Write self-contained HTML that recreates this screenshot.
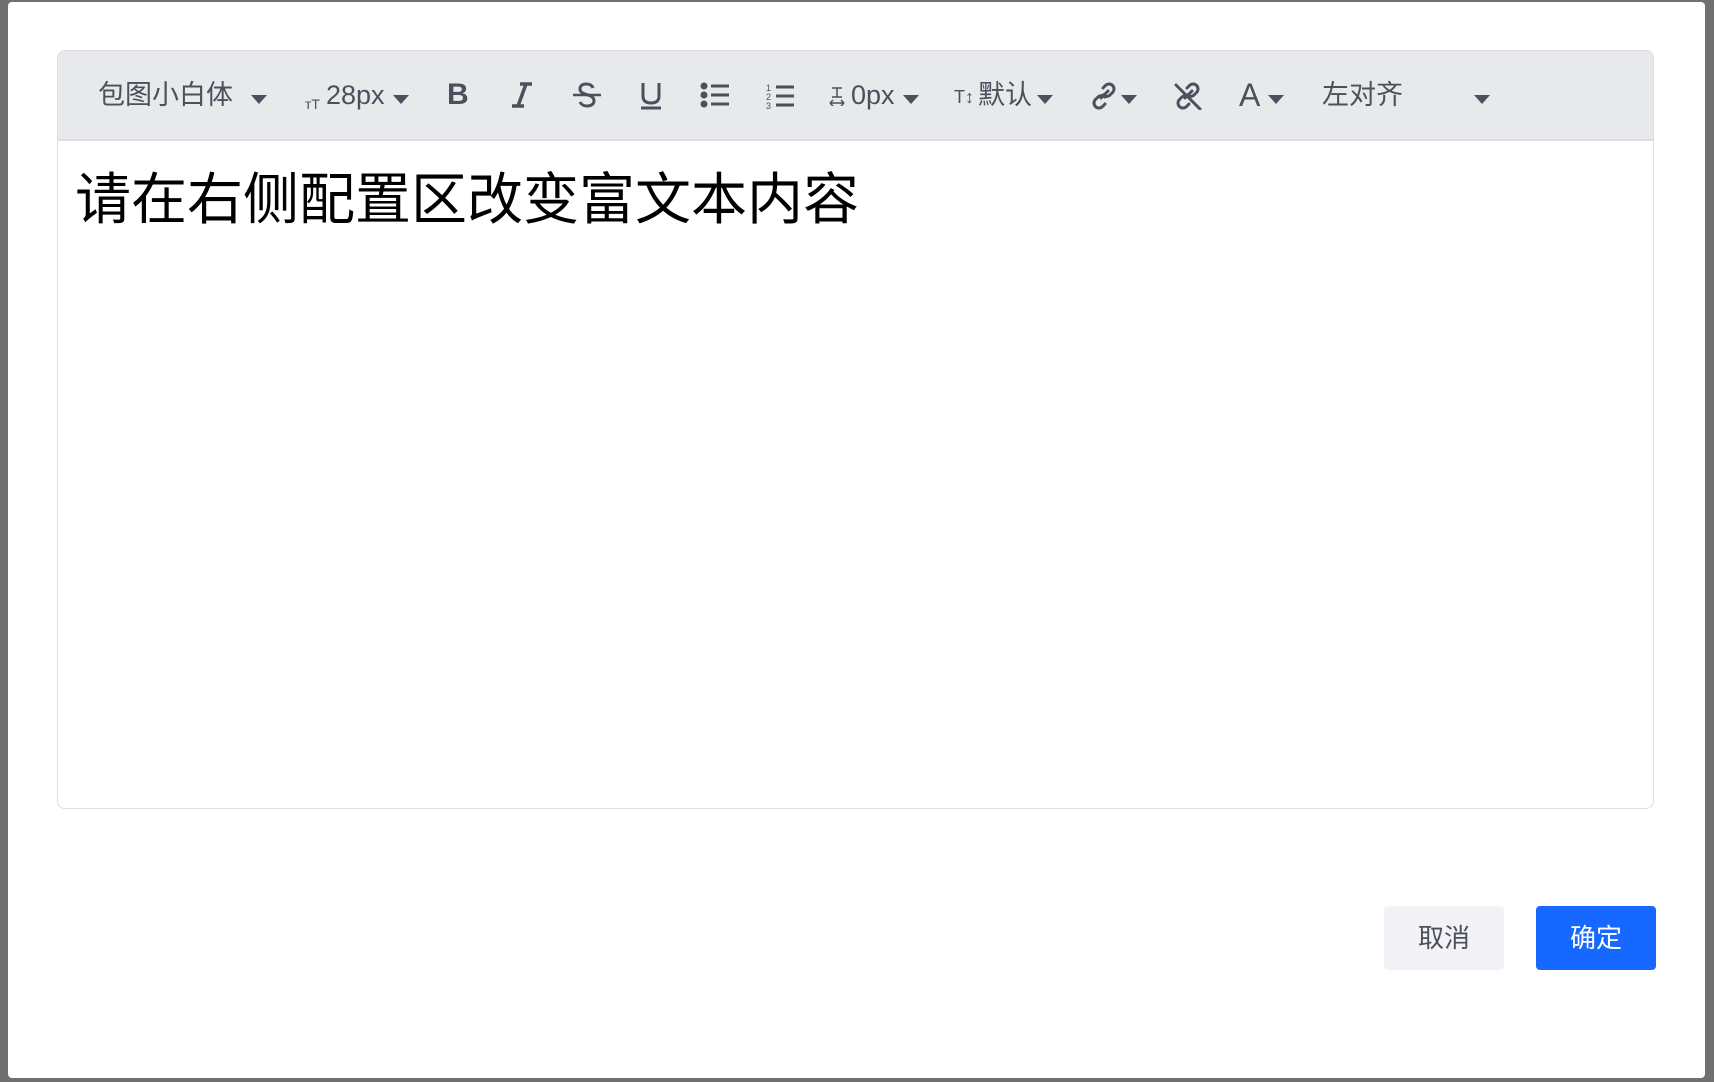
<!DOCTYPE html>
<html><head><meta charset="utf-8">
<style>
*{margin:0;padding:0;box-sizing:border-box}
body{width:1714px;height:1082px;background:#707070;position:relative;overflow:hidden;font-family:"Liberation Sans","Noto Sans CJK SC",sans-serif}
.modal{position:absolute;left:8px;top:2px;width:1697px;height:1076px;background:#fff;border-radius:4px}
.box{position:absolute;left:57px;top:50px;width:1597px;height:759px;border:1px solid #dcdee2;border-radius:8px;overflow:hidden;background:#fff}
.tb{position:absolute;left:0;top:0;width:100%;height:90px;background:#e8e9eb;border-bottom:2px solid #dcdee2}
.t{position:absolute;top:75px;height:40px;line-height:40px;font-size:27px;color:#4b505c;white-space:nowrap}
.ic{position:absolute;top:82px}
.car{position:absolute;width:0;height:0;border-left:8px solid transparent;border-right:8px solid transparent;border-top:9px solid #4b505c}
.content{position:absolute;left:75px;top:167px;font-size:56px;line-height:66px;color:#000;font-family:"Liberation Sans","Noto Sans CJK SC",sans-serif;white-space:nowrap}
.btn{position:absolute;top:906px;width:120px;height:64px;border-radius:4px;font-size:26px;line-height:64px;text-align:center}
</style></head><body>
<div class="modal"></div>
<div class="box"><div class="tb"></div></div>

<span class="t" style="left:98px">包图小白体</span>
<div class="car" style="left:251px;top:95px"></div>

<span class="t" style="left:305px;font-size:14px;top:84px">ᴛT</span>
<span class="t" style="left:326px">28px</span>
<div class="car" style="left:393px;top:95px"></div>

<span class="t" style="left:447px;font-weight:bold;font-size:30px">B</span>
<svg class="ic" style="left:510px" width="24" height="26" viewBox="0 0 24 26"><path d="M10 2h12M2 24h12M16 2L8 24" stroke="#4b505c" stroke-width="3.5" fill="none"/></svg>
<svg class="ic" style="left:572px" width="30" height="26" viewBox="0 0 30 26"><path d="M21 6c-1-3-4-4-7-4-4 0-6 2-6 5 0 7 14 4 14 12 0 3-3 5-7 5-4 0-6-2-7-4" stroke="#4b505c" stroke-width="3" fill="none"/><path d="M1 13h28" stroke="#4b505c" stroke-width="2.5"/></svg>
<svg class="ic" style="left:640px" width="22" height="28" viewBox="0 0 22 28"><path d="M3 1v13c0 5 3 7 8 7s8-2 8-7V1" stroke="#4b505c" stroke-width="3" fill="none"/><path d="M1 26h20" stroke="#4b505c" stroke-width="3"/></svg>
<svg class="ic" style="left:700px" width="30" height="26" viewBox="0 0 30 26"><circle cx="4" cy="4" r="3.5" fill="#4b505c"/><circle cx="4" cy="13" r="3.5" fill="#4b505c"/><circle cx="4" cy="22" r="3.5" fill="#4b505c"/><path d="M11 4h18M11 13h18M11 22h18" stroke="#4b505c" stroke-width="3"/></svg>
<svg class="ic" style="left:766px" width="30" height="28" viewBox="0 0 30 28"><text x="0" y="9" font-size="9" fill="#4b505c" font-family="Liberation Sans">1</text><text x="0" y="18" font-size="9" fill="#4b505c" font-family="Liberation Sans">2</text><text x="0" y="27" font-size="9" fill="#4b505c" font-family="Liberation Sans">3</text><path d="M10 5h18M10 14h18M10 23h18" stroke="#4b505c" stroke-width="3"/></svg>

<svg class="ic" style="left:829px;top:86px" width="16" height="20" viewBox="0 0 16 20"><path d="M3 2h10M8 2v9M3 11h10M1 17h14M1 17l3-3M1 17l3 3M15 17l-3-3M15 17l-3 3" stroke="#4b505c" stroke-width="1.5" fill="none"/></svg>
<span class="t" style="left:851px">0px</span>
<div class="car" style="left:903px;top:95px"></div>

<span class="t" style="left:954px;font-size:18px;top:77px">T↕</span>
<span class="t" style="left:978px">默认</span>
<div class="car" style="left:1037px;top:95px"></div>

<svg class="ic" style="left:1089px" width="30" height="28" viewBox="0 0 30 28"><path d="M12 16l7-7M14 6l3-3a5 5 0 0 1 7 7l-3 3a5 5 0 0 1-7 0M16 22l-3 3a5 5 0 0 1-7-7l3-3a5 5 0 0 1 7 0" stroke="#4b505c" stroke-width="3" fill="none" stroke-linecap="round"/></svg>
<div class="car" style="left:1121px;top:95px"></div>
<svg class="ic" style="left:1173px" width="30" height="28" viewBox="0 0 30 28"><path d="M3 3l24 24M14 6l3-3a5 5 0 0 1 7 7l-3 3a5 5 0 0 1-7 0M16 22l-3 3a5 5 0 0 1-7-7l3-3a5 5 0 0 1 7 0M12 16l7-7" stroke="#4b505c" stroke-width="3" fill="none" stroke-linecap="round"/></svg>

<span class="t" style="left:1239px;font-size:32px">A</span>
<div class="car" style="left:1268px;top:95px"></div>

<span class="t" style="left:1322px">左对齐</span>
<div class="car" style="left:1474px;top:95px"></div>

<div class="content">请在右侧配置区改变富文本内容</div>

<div class="btn" style="left:1384px;background:#f2f2f7;color:#4b505c">取消</div>
<div class="btn" style="left:1536px;background:#1768ff;color:#fff">确定</div>
</body></html>
